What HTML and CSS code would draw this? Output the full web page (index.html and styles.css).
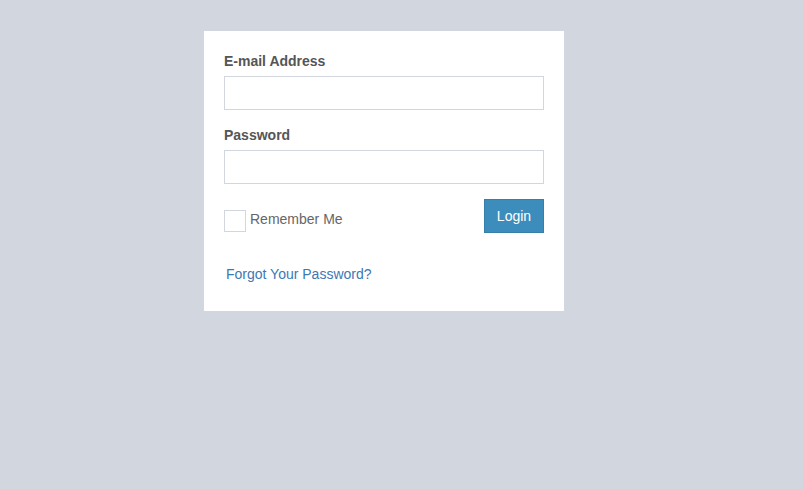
FILE: index.html
```html
<!DOCTYPE html>
<html>
<head>
<meta charset="utf-8">
<link rel="stylesheet" href="styles.css">
</head>
<body>
<div class="page">
  <form class="card">
    <label class="label" for="email">E-mail Address</label>
    <input class="input" id="email" type="email">
    <label class="label" for="password">Password</label>
    <input class="input" id="password" type="password">
    <div class="row">
      <label class="remember"><span class="box"></span><span class="remember-text">Remember Me</span></label>
      <button class="btn" type="button">Login</button>
    </div>
    <a class="forgot" href="#">Forgot Your Password?</a>
  </form>
</div>
</body>
</html>
```
FILE: styles.css
```css
html, body {
  margin: 0;
  padding: 0;
  height: 100%;
  background: #d2d6de;
  font-family: "Liberation Sans", Arial, sans-serif;
  font-size: 14px;
}
.page {
  display: flex;
  justify-content: flex-start;
  padding: 31px 0 0 204px;
}
.card {
  width: 320px;
  background: #fff;
  padding: 20px 20px 27px 20px;
  display: flex;
  flex-direction: column;
}
.label {
  display: block;
  font-weight: bold;
  color: #555;
  line-height: 20px;
  margin-bottom: 5px;
}
.input {
  box-sizing: border-box;
  height: 34px;
  width: 320px;
  margin: 0 0 15px 0;
  border: 1px solid #d2d6de;
  background: #fff;
  padding: 6px 12px;
  outline: none;
}
.row {
  display: flex;
  justify-content: space-between;
  align-items: flex-start;
  height: 34px;
}
.remember {
  display: flex;
  align-items: flex-start;
  gap: 4px;
  margin-top: 11px;
  color: #666;
}
.remember-text {
  line-height: 18px;
}
.box {
  box-sizing: border-box;
  width: 22px;
  height: 22px;
  border: 1px solid #d2d6de;
  background: #fff;
}
.btn {
  box-sizing: border-box;
  width: 60px;
  height: 34px;
  background: #3c8dbc;
  border: 1px solid #367fa9;
  color: #fff;
  font-family: "Liberation Sans", Arial, sans-serif;
  font-size: 14px;
  padding: 0;
  cursor: pointer;
}
.forgot {
  margin-top: 31px;
  margin-left: 2px;
  line-height: 20px;
  color: #3c78b4;
  text-decoration: none;
}
```
